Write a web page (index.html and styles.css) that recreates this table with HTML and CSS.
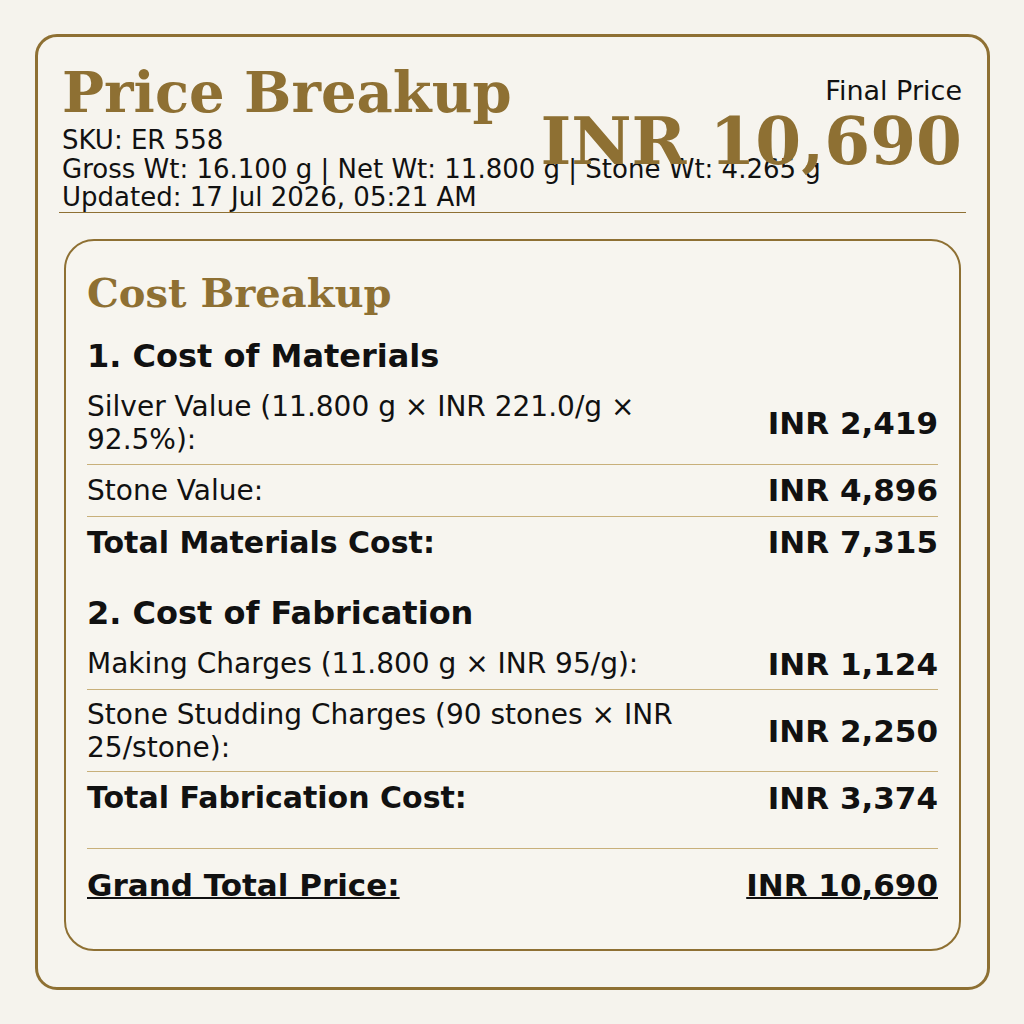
FILE: index.html
```html
<!DOCTYPE html>
<html lang="en">
<head>
<meta charset="utf-8">
<title>Price Breakup</title>
<link rel="stylesheet" href="styles.css">
</head>
<body>
<div class="page">
  <div class="card">
    <header class="head">
      <div class="head-left">
        <h1 class="title">Price Breakup</h1>
        <div class="meta">SKU: ER 558</div>
        <div class="meta">Gross Wt: 16.100 g | Net Wt: 11.800 g | Stone Wt: 4.265 g</div>
        <div class="meta">Updated: 17 Jul 2026, 05:21 AM</div>
      </div>
      <div class="head-right">
        <div class="final-label">Final Price</div>
        <div class="final-value">INR 10,690</div>
      </div>
    </header>
    <section class="breakup">
      <h2 class="breakup-title">Cost Breakup</h2>
      <div class="group">
        <h3 class="group-title">1. Cost of Materials</h3>
        <div class="row"><span class="label">Silver Value (11.800 g × INR 221.0/g × 92.5%):</span><span class="value">INR 2,419</span></div>
        <div class="row"><span class="label">Stone Value:</span><span class="value">INR 4,896</span></div>
        <div class="row total"><span class="label">Total Materials Cost:</span><span class="value">INR 7,315</span></div>
      </div>
      <div class="group">
        <h3 class="group-title">2. Cost of Fabrication</h3>
        <div class="row"><span class="label">Making Charges (11.800 g × INR 95/g):</span><span class="value">INR 1,124</span></div>
        <div class="row"><span class="label">Stone Studding Charges (90 stones × INR 25/stone):</span><span class="value">INR 2,250</span></div>
        <div class="row total"><span class="label">Total Fabrication Cost:</span><span class="value">INR 3,374</span></div>
      </div>
      <div class="grand"><span>Grand Total Price:</span><span>INR 10,690</span></div>
    </section>
  </div>
</div>
</body>
</html>
```

FILE: styles.css
```css
html, body {
  margin: 0;
  background: #f5f3ed;
}
body {
  font-family: "DejaVu Sans", "Noto Sans", sans-serif;
  color: #111111;
}
.page {
  padding: 34px 34px 34px 35px;
}
.card {
  box-sizing: border-box;
  height: 956px;
  border: 3px solid #8e7033;
  border-radius: 22px;
  padding: 21px 21px 0;
  background: #f6f4ee;
}
.head {
  display: flex;
  justify-content: space-between;
  align-items: flex-start;
  padding: 0 4px 0 3px;
  border-bottom: 1px solid #8e7033;
}
.head-left {
  flex: 1 1 0;
  min-width: 0;
  white-space: nowrap;
}
.title {
  font-family: "DejaVu Serif", "Liberation Serif", serif;
  font-weight: bold;
  font-size: 56px;
  line-height: 68px;
  color: #8e7033;
  margin: 0;
}
.meta {
  font-size: 26px;
  line-height: 1.1;
}
.head-right {
  flex-shrink: 0;
  text-align: right;
  padding-top: 17.5px;
}
.final-label {
  font-size: 27px;
  line-height: 1.1;
}
.final-value {
  font-family: "DejaVu Serif", "Liberation Serif", serif;
  font-weight: bold;
  font-size: 66px;
  line-height: 1.1;
  color: #8e7033;
  white-space: nowrap;
}
.breakup {
  margin: 26px 5px 0;
  border: 2px solid #8e7033;
  border-radius: 30px;
  padding: 28px 21px 46px;
  background: #f7f5ef;
}
.breakup-title {
  font-family: "DejaVu Serif", "Liberation Serif", serif;
  font-weight: bold;
  font-size: 40px;
  line-height: normal;
  color: #8e7033;
  margin: 0 0 21px;
}
.group + .group {
  margin-top: 26.5px;
}
.group-title {
  font-size: 32px;
  font-weight: bold;
  line-height: normal;
  margin: 0 0 8px;
}
.group + .group .group-title {
  margin-bottom: 6px;
}
.row {
  display: flex;
  justify-content: space-between;
  align-items: center;
  gap: 16px;
  padding: 7.5px 0;
  border-bottom: 1px solid #c8b07a;
}
.row.total {
  border-bottom: none;
}
.label {
  font-size: 28px;
  max-width: 70%;
}
.value {
  font-size: 31px;
  font-weight: bold;
  white-space: nowrap;
}
.total .label {
  font-size: 30px;
  font-weight: bold;
}
.grand {
  margin-top: 25px;
  border-top: 1px solid #c8b07a;
  padding-top: 18px;
  display: flex;
  justify-content: space-between;
  font-size: 31px;
  font-weight: bold;
  text-decoration: underline;
  text-decoration-thickness: 2px;
  text-underline-offset: 0.5px;
}
```
